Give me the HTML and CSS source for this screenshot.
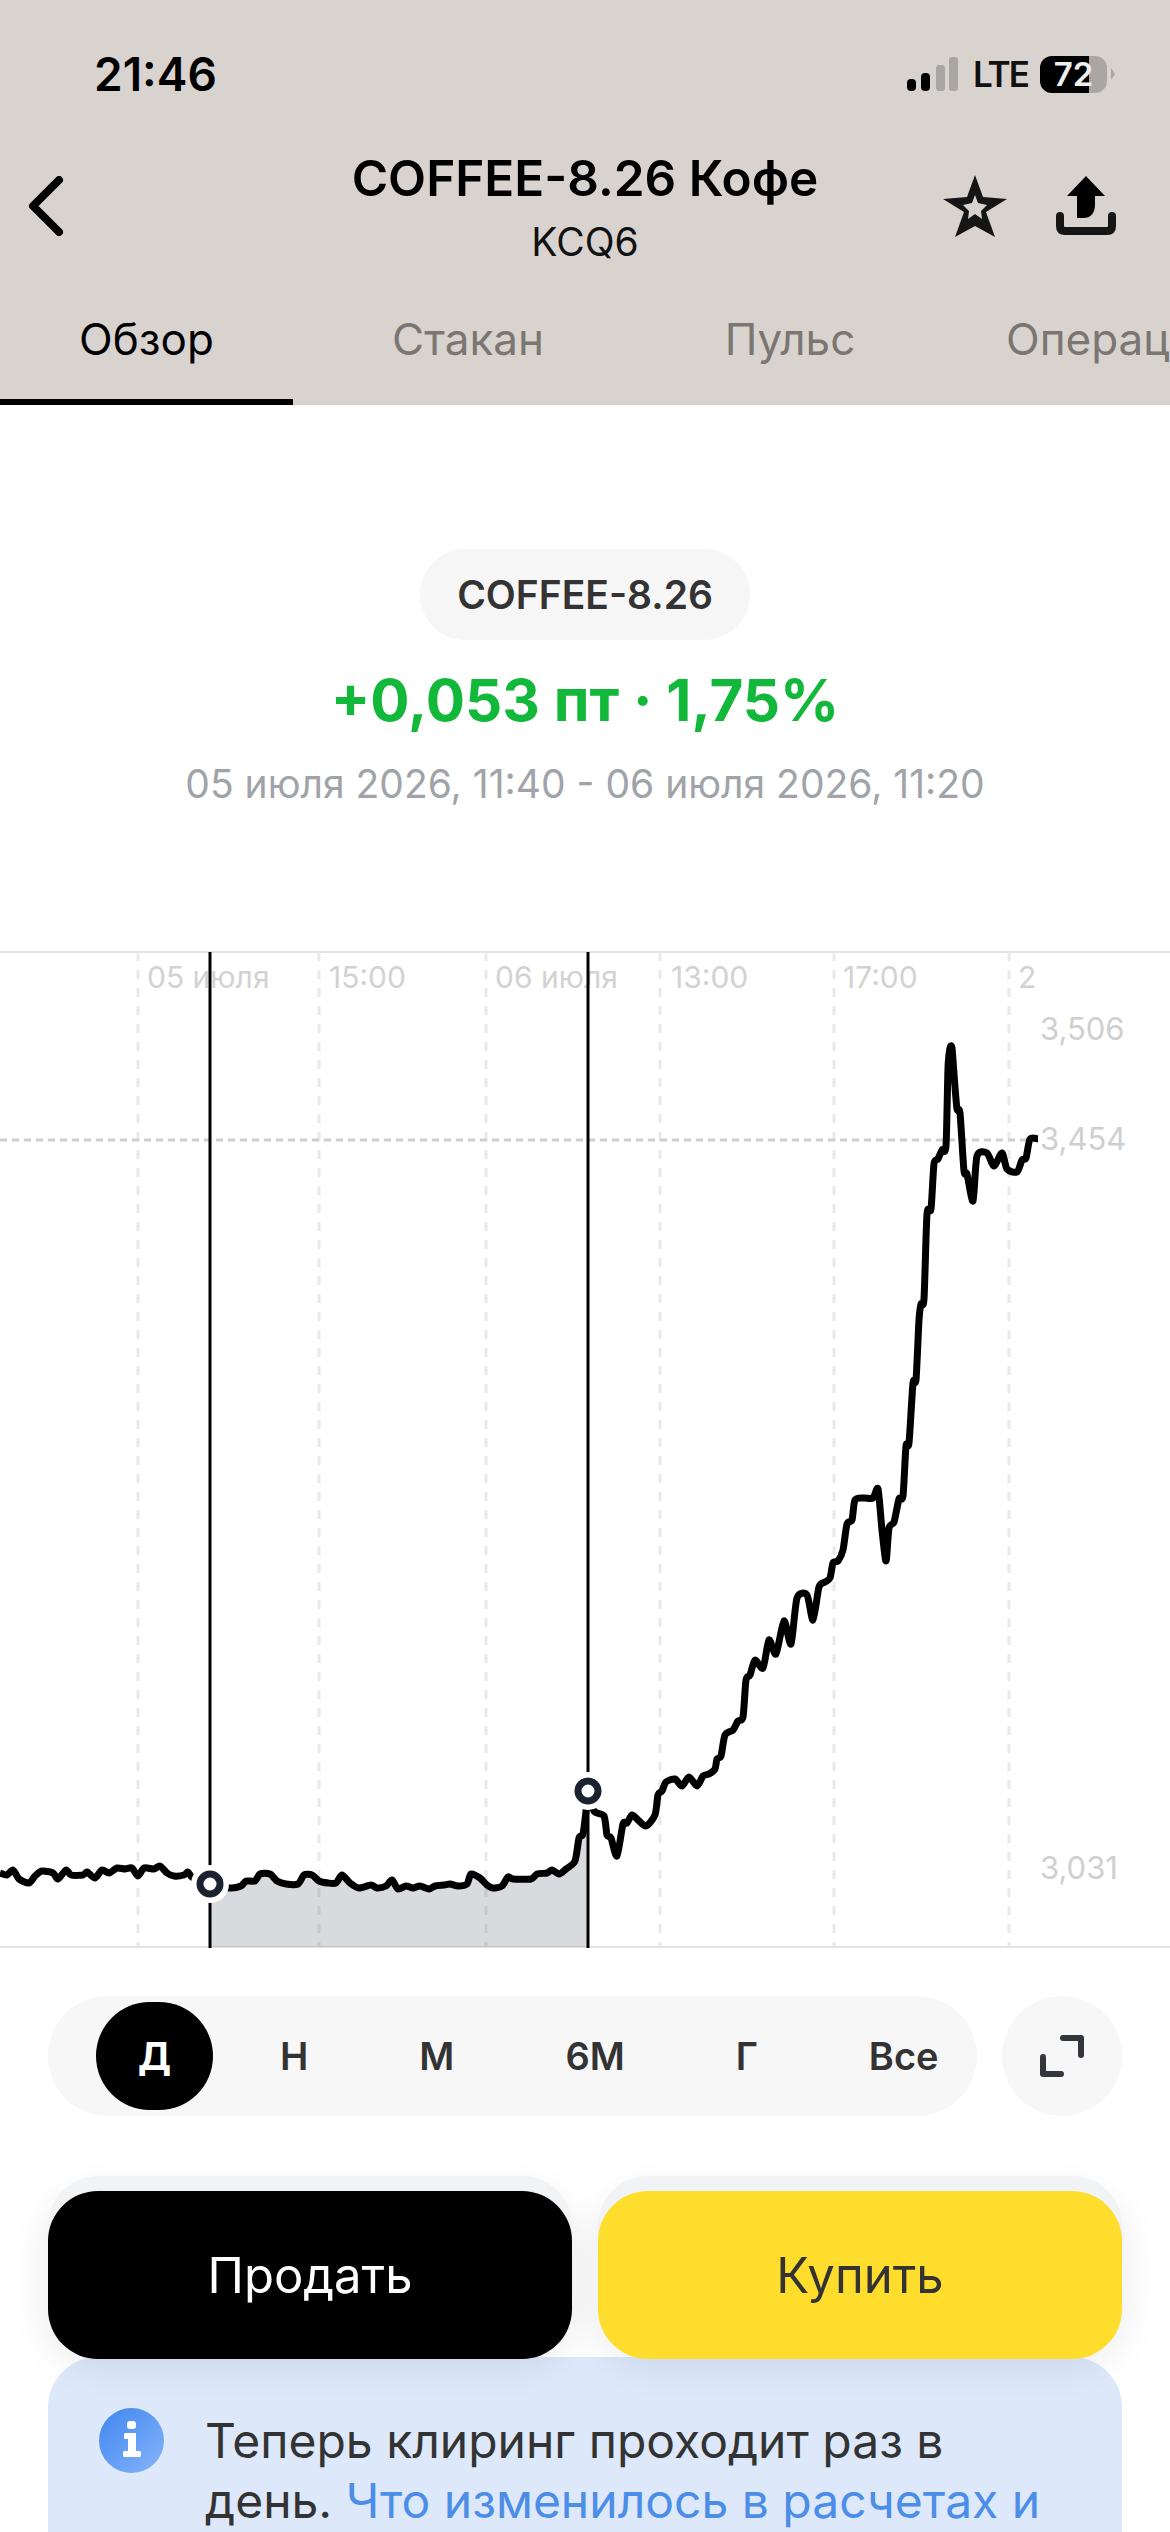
FILE: index.html
```html
<!DOCTYPE html>
<html lang="ru">
<head>
  <meta charset="UTF-8" />
  <meta name="viewport" content="width=device-width, initial-scale=1.0"/>
  <title>COFFEE-8.26 Кофе</title>
  <link rel="stylesheet" href="styles.css">
</head>
<body>

  <!-- Шапка -->
  <header class="top">
    <div class="status">
      <span class="time">21:46</span>
      <div class="status-right">
        <svg class="signal" width="51" height="34" viewBox="0 0 51 34">
          <rect x="0" y="22" width="9" height="12" rx="4" fill="#000"/>
          <rect x="14" y="16" width="9" height="18" rx="4" fill="#000"/>
          <rect x="29" y="8" width="9" height="26" rx="3" fill="#aaa6a3"/>
          <rect x="42" y="0" width="9" height="34" rx="3" fill="#aaa6a3"/>
        </svg>
        <span class="lte">LTE</span>
        <div class="battery"><span class="battery-level"></span><span class="battery-num">72</span></div>
        <svg class="battery-nub" width="4" height="12" viewBox="0 0 4 12">
          <path d="M0 0 L4 6 L0 12 Z" fill="#aaa6a3"/>
        </svg>
      </div>
    </div>

    <div class="titlebar">
      <svg width="36" height="60" viewBox="0 0 36 60">
        <path d="M31 4 L5 30 L31 56" fill="none" stroke="#000" stroke-width="8" stroke-linecap="round" stroke-linejoin="round"/>
      </svg>
      <div class="title">
        <div class="title-main">COFFEE-8.26 Кофе</div>
        <div class="title-sub">KCQ6</div>
      </div>
      <div class="actions">
        <svg width="64" height="62" viewBox="0 0 64 62">
          <path fill="#151515" fill-rule="evenodd" d="M32 0 L40 22 L64 24 L43 37 L52 62 L32 51 L12 62 L21 37 L0 24 L24 22 Z M32 20 L29 28 L20 30 L26 36 L25 44 L32 39 L39 44 L38 36 L44 30 L35 28 Z"/>
        </svg>
        <svg width="60" height="60" viewBox="0 0 60 60">
          <path d="M30 0 L49 20 H39 V28 Q39 42 27 42 H21 V20 H11 Z" fill="#000"/>
          <path d="M4 40 V50 Q4 55 9 55 H51 Q56 55 56 50 V40" fill="none" stroke="#151515" stroke-width="8" stroke-linecap="round"/>
        </svg>
      </div>
    </div>

    <nav class="tabs">
      <a class="tab active">Обзор</a>
      <a class="tab">Стакан</a>
      <a class="tab">Пульс</a>
      <a class="tab">Операции</a>
    </nav>
  </header>

  <!-- Итог по выбранному периоду -->
  <section class="summary">
    <div class="ticker">COFFEE-8.26</div>
    <div class="change">+0,053 пт · 1,75%</div>
    <div class="period">05 июля 2026, 11:40 - 06 июля 2026, 11:20</div>
  </section>

  <!-- График -->
  <svg class="chart" width="1170" height="998" viewBox="0 950 1170 998">
    <line class="frame" x1="0" y1="951" x2="1170" y2="951"/>
    <line class="frame" x1="0" y1="1946" x2="1170" y2="1946"/>

    <g class="grid">
      <line x1="138" y1="951" x2="138" y2="1945"/>
      <line x1="319" y1="951" x2="319" y2="1945"/>
      <line x1="486" y1="951" x2="486" y2="1945"/>
      <line x1="660" y1="951" x2="660" y2="1945"/>
      <line x1="834" y1="951" x2="834" y2="1945"/>
      <line x1="1009" y1="951" x2="1009" y2="1945"/>
    </g>
    <line class="last-price" x1="0" y1="1139" x2="1036" y2="1139"/>

    <g class="x-label">
      <text x="147" y="987">05 июля</text>
      <text x="329" y="987">15:00</text>
      <text x="495" y="987">06 июля</text>
      <text x="671" y="987">13:00</text>
      <text x="843" y="987">17:00</text>
      <text x="1018" y="987">2</text>
    </g>
    <g class="y-label">
      <text x="1040" y="1039">3,506</text>
      <text x="1040" y="1149">3,454</text>
      <text x="1040" y="1878">3,031</text>
    </g>

    <path id="rangeArea" class="range"/>

    <line class="range-line" x1="210" y1="951" x2="210" y2="1947"/>
    <line class="range-line" x1="588" y1="951" x2="588" y2="1947"/>

    <path id="priceLine" class="price"/>

    <circle class="halo" cx="210" cy="1883" r="19"/>
    <circle class="dot" cx="210" cy="1883" r="10"/>
    <circle class="halo" cx="588" cy="1790" r="19"/>
    <circle class="dot" cx="588" cy="1790" r="10"/>
  </svg>

  <!-- Период -->
  <div class="controls">
    <div class="ranges">
      <button class="range-btn active">Д</button>
      <button class="range-btn">Н</button>
      <button class="range-btn">М</button>
      <button class="range-btn">6М</button>
      <button class="range-btn">Г</button>
      <button class="range-btn">Все</button>
    </div>
    <button class="expand">
      <svg width="44" height="42" viewBox="0 0 44 42">
        <path d="M23 3 H41 V20 M3 22 V39 H21" fill="none" stroke="#33363b" stroke-width="6" stroke-linecap="round" stroke-linejoin="round"/>
      </svg>
    </button>
  </div>

  <!-- Заявка -->
  <div class="trade">
    <button class="trade-btn sell">Продать</button>
    <button class="trade-btn buy">Купить</button>
  </div>

  <div class="notice">
    <svg class="notice-icon" width="65" height="65" viewBox="0 0 65 65">
      <defs>
        <linearGradient id="infoBg" x1="0" y1="0" x2="1" y2="1">
          <stop offset="0" stop-color="#3f85ef"/>
          <stop offset="1" stop-color="#86b5fa"/>
        </linearGradient>
      </defs>
      <circle cx="32.5" cy="32.5" r="32.5" fill="url(#infoBg)"/>
      <rect x="28" y="13" width="9" height="8" rx="3" fill="#fff"/>
      <rect x="25" y="25" width="12" height="6" rx="1.5" fill="#fff"/>
      <rect x="29" y="25" width="8" height="22" fill="#fff"/>
      <rect x="24" y="43" width="18" height="6" rx="1.5" fill="#fff"/>
    </svg>
    <p>Теперь клиринг проходит раз в день. <a>Что изменилось в расчетах и</a></p>
  </div>

  <script src="chart.js"></script>
</body>
</html>
```

FILE: styles.css
```css
* {
  box-sizing: border-box;
}
html, body {
  height: 2532px;
  overflow: hidden;
}
body {
  margin: 0;
  width: 1170px;
  background: #fff;
  color: #333;
  font-family: 'Inter', 'Noto Sans', sans-serif;
}
button {
  font-family: inherit;
  border: none;
  padding: 0;
}

/* header */
.top {
  height: 405px;
  background: #d9d3cf;
  overflow: hidden;
}
.status {
  height: 148px;
  padding: 50px 55px 0 94px;
  display: flex;
  justify-content: space-between;
  align-items: flex-start;
}
.time {
  font-size: 46px;
  font-weight: 600;
  line-height: 48px;
  color: #000;
}
.status-right {
  display: flex;
  align-items: center;
  height: 48px;
}
.signal {
  margin-right: 15px;
}
.lte {
  width: 67px;
  font-size: 35px;
  font-weight: 600;
  letter-spacing: -2px;
  color: #111;
}
.battery {
  position: relative;
  width: 67px;
  height: 37px;
  border-radius: 12px;
  background: #aaa6a3;
  overflow: hidden;
}
.battery-level {
  position: absolute;
  left: 0;
  top: 0;
  bottom: 0;
  width: 49px;
  background: #000;
}
.battery-num {
  position: absolute;
  inset: 0;
  text-align: center;
  font-size: 33px;
  font-weight: 600;
  line-height: 37px;
  color: #eee;
}
.battery-nub {
  margin-left: 4px;
}
.titlebar {
  height: 116px;
  padding: 0 54px 0 28px;
  display: flex;
  align-items: center;
  position: relative;
}
.title {
  position: absolute;
  left: 0;
  right: 0;
  top: 0;
  text-align: center;
  color: #000;
}
.title-main {
  font-size: 49.5px;
  font-weight: 600;
  line-height: 60px;
}
.title-sub {
  font-size: 39px;
  line-height: 44px;
  margin-top: 12px;
  color: #111;
}
.actions {
  margin-left: auto;
  display: flex;
  align-items: center;
  gap: 49px;
}
.tabs {
  display: flex;
  height: 141px;
  white-space: nowrap;
}
.tab {
  flex: none;
  width: 322px;
  padding-top: 41px;
  line-height: 68px;
  font-size: 44px;
  text-align: center;
  color: #7b7672;
}
.tab.active {
  width: 293px;
  margin-right: 14px;
  border-bottom: 6px solid #000;
  color: #000;
}
.tab:last-child {
  width: auto;
  margin-left: 55px;
}

/* summary */
.summary {
  height: 545px;
  padding-top: 144px;
  text-align: center;
}
.ticker {
  display: inline-block;
  height: 91px;
  padding: 0 37px;
  border-radius: 46px;
  background: #f6f6f7;
  font-size: 39px;
  font-weight: 600;
  line-height: 91px;
  color: #333;
}
.change {
  margin-top: 24px;
  font-size: 58.3px;
  font-weight: 700;
  line-height: 72px;
  color: #12b83a;
}
.period {
  margin-top: 24px;
  font-size: 39px;
  line-height: 48px;
  color: #a0a3a8;
}

/* chart */
.chart {
  display: block;
  margin-top: 1px;
}
.frame {
  stroke: #e4e4e4;
  stroke-width: 2;
}
.grid line {
  stroke: #e9e9e9;
  stroke-width: 3;
  stroke-dasharray: 9 9;
}
.last-price {
  stroke: #cfcfcf;
  stroke-width: 3;
  stroke-dasharray: 7 5;
}
.x-label text {
  font-size: 30px;
  fill: #d2d2d2;
}
.y-label text {
  font-size: 31px;
  fill: #cfcfcf;
}
.range {
  fill: rgba(60, 70, 85, 0.2);
}
.range-line {
  stroke: #000;
  stroke-width: 3;
}
.price {
  fill: none;
  stroke: #000;
  stroke-width: 7;
  stroke-linejoin: round;
}
.halo {
  fill: #fff;
}
.dot {
  fill: #fff;
  stroke: #1a2230;
  stroke-width: 7;
}

/* period buttons */
.controls {
  display: flex;
  gap: 25px;
  padding: 47px 48px 0;
}
.ranges {
  width: 929px;
  height: 120px;
  padding: 6px 0 6px 48px;
  display: flex;
  gap: 47px;
  border-radius: 60px;
  background: #f7f7f8;
}
.range-btn {
  padding: 0 32px;
  height: 108px;
  border-radius: 54px;
  background: none;
  font-size: 38px;
  font-weight: 600;
  color: #333;
}
.range-btn.active {
  padding: 0;
  width: 117px;
  margin-right: -12px;
  background: #000;
  color: #fff;
  font-weight: 700;
}
.expand {
  width: 120px;
  height: 120px;
  border-radius: 50%;
  background: #f7f7f8;
  display: flex;
  align-items: center;
  justify-content: center;
}

/* trade */
.trade {
  position: relative;
  z-index: 1;
  display: flex;
  gap: 26px;
  padding: 75px 48px 0;
}
.trade-btn {
  flex: 1;
  height: 168px;
  border-radius: 50px;
  font-size: 49px;
  box-shadow: 0 -15px 0 #f2f3f4, 0 4px 40px rgba(0, 0, 0, 0.09);
}
.sell {
  background: #000;
  color: #fff;
}
.buy {
  background: #ffdd2d;
  color: #333;
}
.notice {
  margin: -2px 48px 0;
  height: 176px;
  padding: 51px 52px 0 51px;
  display: flex;
  gap: 41px;
  border-radius: 50px 50px 0 0;
  background: #dde8fb;
}
.notice-icon {
  flex: none;
}
.notice p {
  margin: 3px 0 0;
  font-size: 48px;
  line-height: 60px;
  color: #333;
}
.notice a {
  color: #4c8de8;
}
```

FILE: chart.js
```js
// цена: x, y в координатах страницы
const points = [
  [0,1872],[7,1874],[13,1869],[19,1878],[29,1882],[35,1875],[42,1870],[53,1872],[58,1878],[66,1869],
  [71,1874],[83,1874],[87,1871],[95,1877],[102,1869],[109,1872],[117,1867],[125,1868],[132,1867],[138,1875],
  [144,1867],[154,1868],[160,1865],[167,1872],[174,1875],[184,1874],[188,1871],[193,1877],[210,1883],[230,1887],
  [241,1885],[246,1880],[255,1880],[260,1873],[270,1873],[277,1880],[286,1883],[298,1883],[304,1874],[312,1874],
  [319,1880],[328,1882],[336,1882],[342,1874],[350,1882],[359,1887],[371,1884],[377,1887],[386,1885],[392,1879],
  [398,1888],[406,1885],[413,1887],[420,1885],[429,1888],[435,1885],[444,1884],[450,1883],[458,1885],[467,1883],
  [471,1873],[480,1877],[487,1884],[493,1887],[502,1885],[508,1876],[513,1878],[531,1878],[537,1873],[547,1872],
  [552,1869],[559,1873],[566,1868],[575,1860],[579,1837],[583,1833],[586,1810],[588,1790],[594,1810],[604,1815],
  [607,1834],[611,1837],[617,1855],[623,1823],[627,1822],[632,1814],[638,1819],[646,1825],[655,1814],[658,1794],
  [662,1790],[666,1781],[675,1778],[682,1785],[689,1776],[697,1785],[703,1775],[709,1773],[715,1768],[717,1758],
  [721,1755],[725,1734],[733,1729],[738,1720],[743,1716],[746,1679],[750,1674],[755,1659],[763,1667],[769,1639],
  [776,1653],[784,1620],[791,1643],[797,1597],[807,1594],[813,1619],[819,1586],[825,1581],[830,1577],[833,1562],
  [838,1560],[843,1549],[847,1523],[852,1519],[855,1499],[864,1497],[873,1497],[878,1488],[882,1529],[886,1560],
  [889,1527],[894,1521],[899,1498],[903,1495],[906,1445],[909,1442],[913,1382],[916,1379],[919,1319],[921,1303],
  [924,1298],[927,1213],[931,1208],[934,1163],[938,1158],[942,1149],[946,1145],[948,1067],[950,1047],[952,1047],
  [954,1073],[957,1108],[960,1112],[964,1170],[967,1173],[973,1200],[977,1155],[987,1152],[994,1165],[1002,1152],
  [1007,1168],[1017,1171],[1022,1159],[1026,1157],[1030,1138],[1038,1138]
];

// сглаживание (Catmull-Rom в кривые Безье)
function smooth(pts) {
  let d = 'M' + pts[0][0] + ' ' + pts[0][1];
  for (let i = 0; i < pts.length - 1; i++) {
    const p0 = pts[i - 1] || pts[i];
    const p1 = pts[i];
    const p2 = pts[i + 1];
    const p3 = pts[i + 2] || p2;
    const c1x = p1[0] + (p2[0] - p0[0]) / 8;
    const c1y = p1[1] + (p2[1] - p0[1]) / 8;
    const c2x = p2[0] - (p3[0] - p1[0]) / 8;
    const c2y = p2[1] - (p3[1] - p1[1]) / 8;
    d += ' C' + c1x + ' ' + c1y + ' ' + c2x + ' ' + c2y + ' ' + p2[0] + ' ' + p2[1];
  }
  return d;
}

document.getElementById('priceLine').setAttribute('d', smooth(points));

const selected = points.filter(p => p[0] >= 210 && p[0] <= 588);
document.getElementById('rangeArea').setAttribute('d', smooth(selected) + ' L588 1946 L210 1946 Z');
```
